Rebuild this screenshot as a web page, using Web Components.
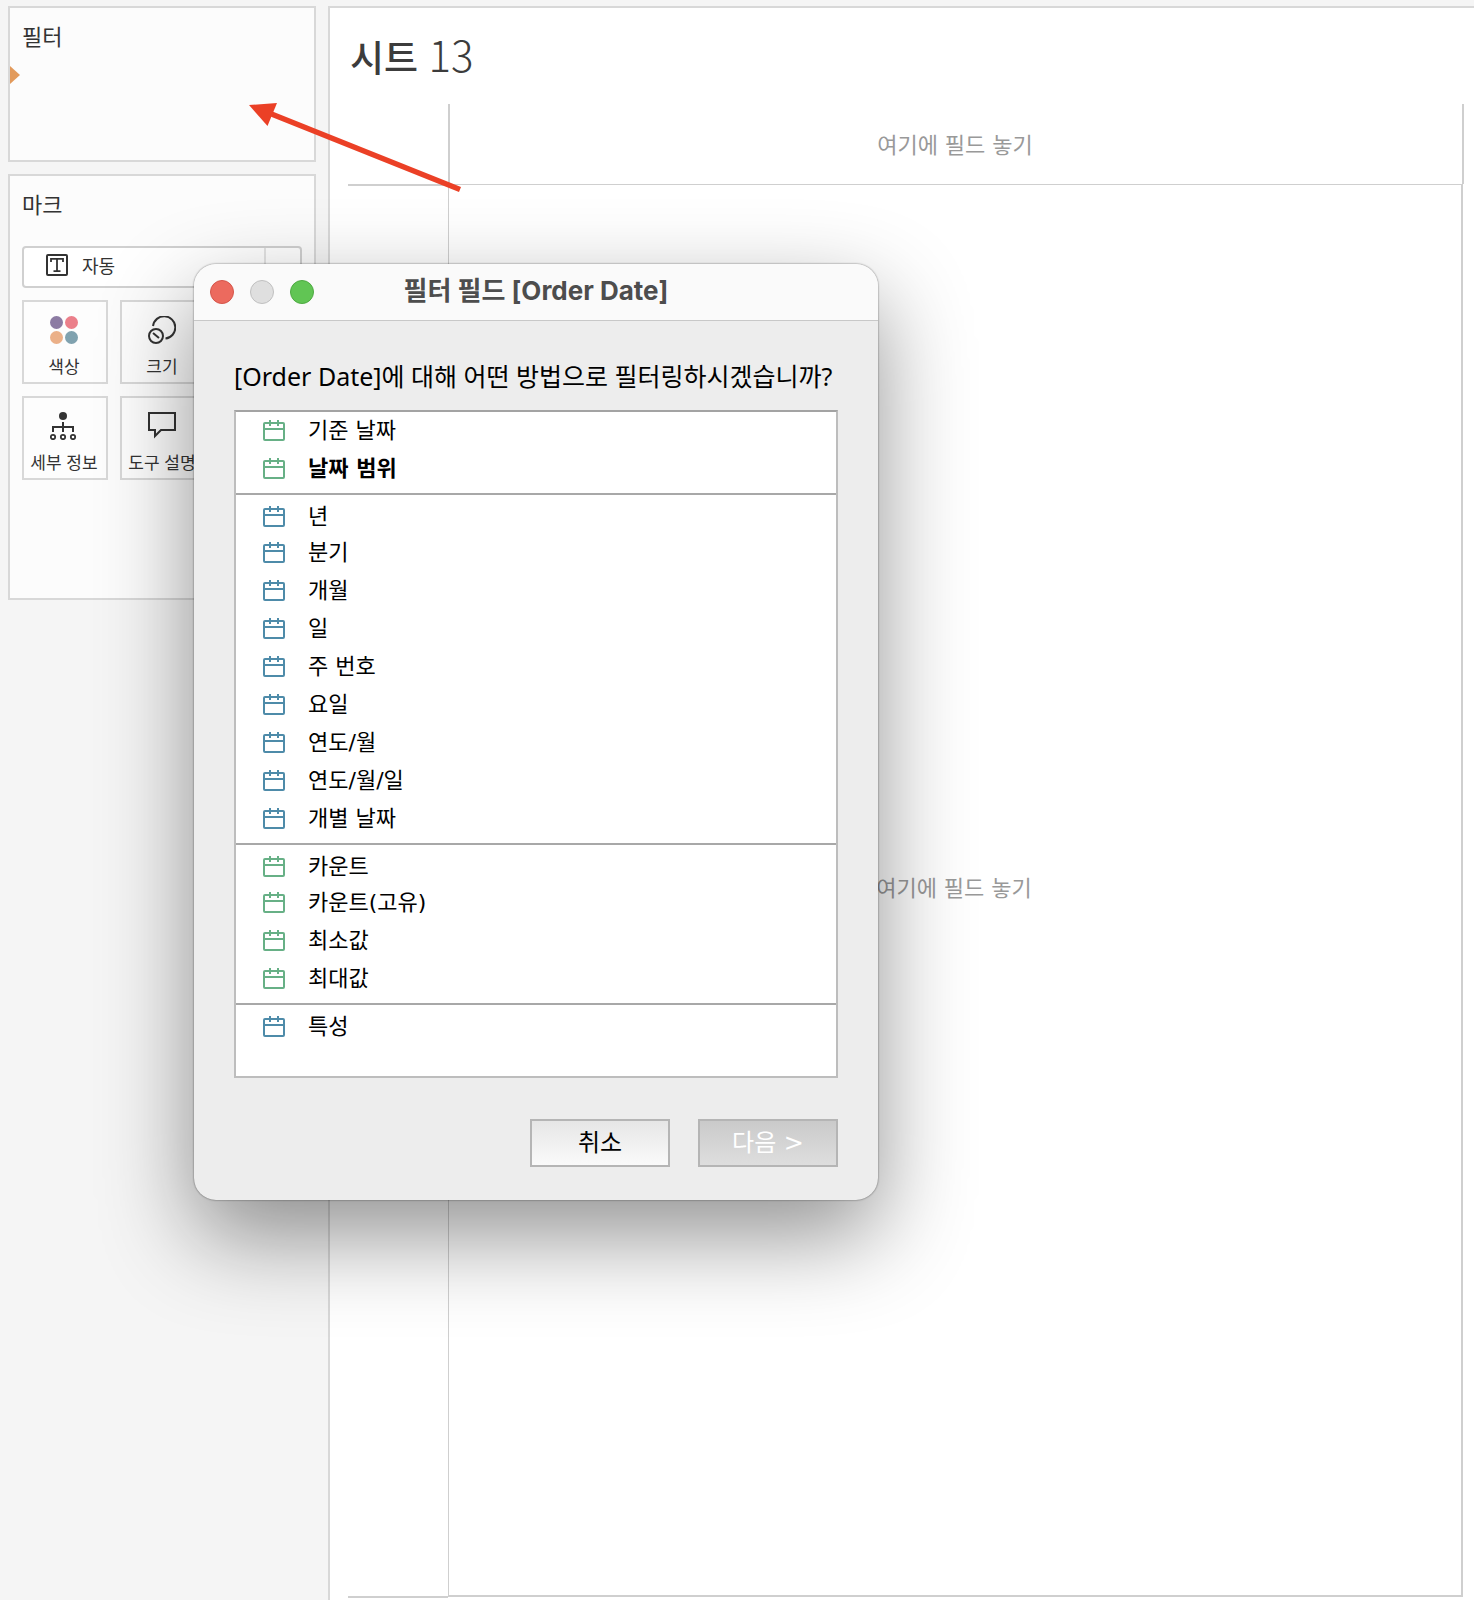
<!DOCTYPE html>
<html lang="ko">
<head>
<meta charset="utf-8">
<title>시트 13</title>
<style>
  body {
    margin: 0;
    background: #f5f5f5;
    color: #333;
    font-family: "DejaVu Sans", "Noto Sans CJK KR", sans-serif;
    font-size: 22px;
  }
</style>
</head>
<body>
<work-space>
  <shelf-card slot="side" heading="필터" class="filters"><drop-marker></drop-marker></shelf-card>
  <shelf-card slot="side" heading="마크">
    <marks-panel></marks-panel>
  </shelf-card>
  <sheet-view slot="main" name="시트" number="13"></sheet-view>
  <pointer-arrow slot="overlay"></pointer-arrow>
  <mac-window slot="overlay" heading="필터 필드 [Order Date]">
    <filter-form></filter-form>
  </mac-window>
</work-space>

<script>
const define = (name, html, setup) => {
  const tpl = document.createElement('template');
  tpl.innerHTML = html;
  customElements.define(name, class extends HTMLElement {
    connectedCallback() {
      if (this.shadowRoot) return;
      const root = this.attachShadow({ mode: 'open' });
      root.append(tpl.content.cloneNode(true));
      if (setup) setup(this, root);
    }
  });
};

define('work-space', `
  <style>
    :host { display: flex; position: relative; box-sizing: border-box; min-height: 100vh;
      padding: 6px 0 0 8px; gap: 12px; overflow: hidden; }
    aside { flex: 0 0 308px; display: flex; flex-direction: column; gap: 12px; }
    main { flex: 1; min-width: 0; display: flex; }
  </style>
  <aside><slot name="side"></slot></aside>
  <main><slot name="main"></slot></main>
  <slot name="overlay"></slot>`);

define('shelf-card', `
  <style>
    :host { display: block; box-sizing: border-box; min-height: 426px; padding: 12px;
      border: 2px solid #d8d8d8; background: #fcfcfc; }
    :host(.filters) { min-height: 156px; }
    h2 { margin: 0; font-size: 22px; line-height: 36px; font-weight: 400; }
  </style>
  <h2></h2><slot></slot>`,
  (el, root) => { root.querySelector('h2').textContent = el.getAttribute('heading'); });

define('drop-marker', `
  <style>
    :host { display: block; margin: 10px 0 0 -12px; height: 18px; }
    svg { display: block; }
  </style>
  <svg width="10" height="18" viewBox="0 0 10 18"><path d="M0 0L10 9L0 18Z" fill="#e29a5b"/></svg>`);

define('marks-panel', `
  <style>
    :host { display: block; margin-top: 22px; }
    .type { display: grid; align-items: center; margin-bottom: 12px; }
    .type > * { grid-area: 1 / 1; }
    .type svg { margin-left: 24px; align-self: start; margin-top: 8px; pointer-events: none; }
    .type i { justify-self: end; width: 36px; height: 38px; border-left: 2px solid #e4e4e4;
      pointer-events: none; }
    select { appearance: none; box-sizing: border-box; width: 100%; height: 42px; margin: 0;
      padding: 0 40px 4px 58px; border: 2px solid #d0d0d0; border-radius: 4px; background: #fff;
      font: 18px/28px "Noto Sans CJK KR", sans-serif; color: #333; }
    .grid { display: grid; grid-template-columns: repeat(2, 86px); gap: 12px; }
  </style>
  <div class="type">
    <select aria-label="마크 유형"><option>자동</option></select>
    <svg width="22" height="22" viewBox="0 0 22 22" fill="none" stroke="#333" stroke-width="2">
      <rect x="1" y="1" width="20" height="20" rx="1"/>
      <path d="M5 8V4.800H17V8M11 5V17M7.500 17.200H14.500" stroke-width="1.800"/>
    </svg>
    <i></i>
  </div>
  <div class="grid">
    <mark-button label="색상">
      <svg width="28" height="28" viewBox="0 0 28 28">
        <circle cx="6.500" cy="6.500" r="6.500" fill="#8c7ba3"/><circle cx="21.500" cy="6.500" r="6.500" fill="#eb7f8a"/>
        <circle cx="6.500" cy="21.500" r="6.500" fill="#ebb088"/><circle cx="21.500" cy="21.500" r="6.500" fill="#80a2af"/>
      </svg>
    </mark-button>
    <mark-button label="크기">
      <svg width="28" height="28" viewBox="0 0 28 28" fill="none" stroke="#333" stroke-width="2">
        <path d="M5 10A11.200 11.200 0 1 1 17.500 22.600"/><circle cx="8" cy="20" r="7"/><path d="M5 17L11 22"/>
      </svg>
    </mark-button>
    <mark-button label="세부 정보">
      <svg width="28" height="28" viewBox="0 0 28 28" fill="none" stroke="#333" stroke-width="2">
        <circle cx="13" cy="4" r="4" fill="#333" stroke="none"/>
        <path d="M13 10V20M3 20V15H23V20"/>
        <g stroke-width="1.800"><circle cx="3" cy="25" r="2.200"/><circle cx="13" cy="25" r="2.200"/><circle cx="23" cy="25" r="2.200"/></g>
      </svg>
    </mark-button>
    <mark-button label="도구 설명">
      <svg width="28" height="28" viewBox="0 0 28 28" fill="none" stroke="#333" stroke-width="2">
        <path d="M1 1H27V18H13L7 24V18H1Z"/>
      </svg>
    </mark-button>
  </div>`);

define('mark-button', `
  <style>
    :host { display: block; }
    button { display: flex; flex-direction: column; align-items: center; gap: 10px; box-sizing: border-box;
      width: 100%; height: 84px; margin: 0; padding: 14px 2px 0 0; border: 2px solid #d8d8d8;
      background: #fdfdfd; font: 17px/24px "Noto Sans CJK KR", sans-serif; color: #333; white-space: nowrap; }
    ::slotted(svg) { display: block; }
  </style>
  <button type="button"><slot></slot><span></span></button>`,
  (el, root) => { root.querySelector('span').textContent = el.getAttribute('label'); });

define('sheet-view', `
  <style>
    :host { flex: 1; display: flex; flex-direction: column; box-sizing: border-box; background: #fff;
      border: solid #d8d8d8; border-width: 2px 0 0 2px; padding: 16px 10px 2px 18px; }
    h1 { height: 62px; margin: 0 0 18px; padding-left: 2px; font: 500 37px/60px "Noto Sans CJK KR", sans-serif;
      color: #3c3c3c; }
    h1 span + span { font-size: 42px; font-weight: 300; }
    .grid { flex: 1; display: grid; grid-template: 80px 1fr / 100px 1fr; color: #999; }
    .grid > div { display: flex; align-items: center; justify-content: center; box-sizing: border-box; }
    .columns { border: solid #cfcfcf; border-width: 0 2px; padding: 0 2px 2px 0; }
    .rows { border: solid #cfcfcf; border-width: 2px 0; }
    .view { border: solid #cfcfcf; border-width: 1px 2px 2px 1px; margin: 0 1px 1px 0; padding: 0 2px 8px 0; }
  </style>
  <h1><span></span> <span></span></h1>
  <div class="grid">
    <div></div><div class="columns">여기에 필드 놓기</div>
    <div class="rows"></div><div class="view">여기에 필드 놓기</div>
  </div>`,
  (el, root) => {
    const [a, b] = root.querySelectorAll('h1 span');
    a.textContent = el.getAttribute('name');
    b.textContent = el.getAttribute('number');
  });

define('pointer-arrow', `
  <style>
    :host { position: absolute; left: 249px; top: 102px; pointer-events: none; }
    svg { display: block; }
  </style>
  <svg width="214" height="92" viewBox="0 0 214 92">
    <path d="M20 11L211 87.500" stroke="#eb4026" stroke-width="5.500"/>
    <path d="M0 3L28 1L18.500 24Z" fill="#eb4026"/>
  </svg>`);

define('mac-window', `
  <style>
    :host { position: absolute; left: 194px; top: 264px; width: 684px; border-radius: 22px;
      background: #ededed; box-shadow: 0 0 2px rgba(0,0,0,.6), 0 36px 92px rgba(0,0,0,.43); }
    header { display: grid; grid-template-columns: 104px 1fr 104px; align-items: center;
      box-sizing: border-box; height: 57px; padding: 0 16px; background: #fafafa;
      border-bottom: 1px solid #c8c8c8; border-radius: 22px 22px 0 0; }
    .lights { display: flex; gap: 16px; }
    button { width: 24px; height: 24px; padding: 0; border: 1px solid #d5554a; border-radius: 50%;
      background: #ec6a5e; }
    button:disabled { background: #dfdfdf; border-color: #c0c0c0; }
    .lights button:last-child { background: #61c554; border-color: #4eaa42; }
    h2 { margin: 0; padding-bottom: 2px; text-align: center; white-space: nowrap; color: #4d4d4d;
      font: 700 26px/36px Inter, "Noto Sans CJK KR", sans-serif; }
  </style>
  <header>
    <div class="lights">
      <button type="button" aria-label="닫기"></button>
      <button type="button" aria-label="최소화" disabled></button>
      <button type="button" aria-label="확대"></button>
    </div>
    <h2></h2>
  </header>
  <slot></slot>`,
  (el, root) => { root.querySelector('h2').textContent = el.getAttribute('heading'); });

define('filter-form', `
  <style>
    :host { display: block; padding: 37px 40px 33px; color: #000; }
    p { margin: 0 0 16px; font: 25px/36px "Noto Sans", "Noto Sans CJK KR", sans-serif; white-space: nowrap; }
    .list { box-sizing: border-box; height: 668px; border: 2px solid #bdbdbd; border-top-color: #a3a3a3;
      background: #fff; }
    date-group + date-group { --first: 36px; border-top: 2px solid #a8a8a8; margin-top: 5px; padding-top: 3px; }
    footer { display: flex; justify-content: flex-end; gap: 28px; margin-top: 41px; }
    footer button { box-sizing: border-box; width: 140px; height: 48px; padding: 0; border: 2px solid #b5b5b5;
      background: linear-gradient(#e6e6e6, #fafafa); color: #000;
      font: 24px/32px "DejaVu Sans", "Noto Sans CJK KR", sans-serif; }
    footer button:disabled { background: linear-gradient(#cacaca, #dedede); color: #fff; }
  </style>
  <p>[Order Date]에 대해 어떤 방법으로 필터링하시겠습니까?</p>
  <div class="list">
    <date-group tone="#67b086" items="기준 날짜,*날짜 범위"></date-group>
    <date-group tone="#4e8ba9" items="년,분기,개월,일,주 번호,요일,연도/월,연도/월/일,개별 날짜"></date-group>
    <date-group tone="#67b086" items="카운트,카운트(고유),최소값,최대값"></date-group>
    <date-group tone="#4e8ba9" items="특성"></date-group>
  </div>
  <footer>
    <button type="button">취소</button>
    <button type="button" disabled>다음 &gt;</button>
  </footer>`);

define('date-group', `
  <style>
    :host { display: block; }
    date-option:first-of-type { height: var(--first, 38px); }
  </style>`,
  (el, root) => {
    el.style.setProperty('--tone', el.getAttribute('tone'));
    for (const text of el.getAttribute('items').split(',')) {
      const option = document.createElement('date-option');
      option.textContent = text.replace('*', '');
      if (text.startsWith('*')) option.className = 'strong';
      root.append(option);
    }
  });

define('date-option', `
  <style>
    :host { display: block; height: 38px; }
    button { display: flex; align-items: flex-start; gap: 23px; box-sizing: border-box; width: 100%;
      height: 100%; margin: 0; padding: 0 27px; border: 0; background: none; color: #000; text-align: left;
      font: 22px/38px "DejaVu Sans", "Noto Sans CJK KR", sans-serif; }
    :host(.strong) button { font-weight: 700; }
    svg { flex: none; margin-top: 8px; color: var(--tone); }
  </style>
  <button type="button">
    <svg width="22" height="21" viewBox="0 0 22 21" fill="none" stroke="currentColor" stroke-width="2">
      <rect x="1" y="3" width="20" height="17" rx="1"/><path d="M1 9H21M7 0V6M15 0V6"/>
    </svg>
    <span><slot></slot></span>
  </button>`);
</script>
</body>
</html>
